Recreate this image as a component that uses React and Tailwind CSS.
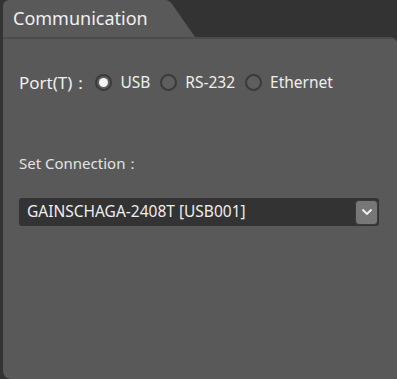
import React, { useState } from 'react';

const font = { fontFamily: '"Segoe UI", "Noto Sans", "Open Sans", sans-serif' };

const Radio = ({ checked, label, onClick }) => (
  <button onClick={onClick} className="flex items-center gap-[8px]">
    <span className="w-[17px] h-[17px] rounded-full border-[2px] border-[#3a3a3a] bg-[#5e5e5e] flex items-center justify-center">
      {checked && <span className="w-[9px] h-[9px] rounded-full bg-[#f4f4f4]"></span>}
    </span>
    <span className="text-[15.5px] text-[#eeeeee]">{label}</span>
  </button>
);

export default function App() {
  const [port, setPort] = useState('USB');

  return (
    <div className="w-[397px] h-[379px] bg-[#333333] overflow-hidden pl-[3px] flex flex-col" style={font}>
      {/* tab */}
      <div className="flex h-[37px] shrink-0">
        <div className="w-[158px] bg-[#595959] rounded-tl-[6px] pl-[10px] pt-[5px] text-[18px] text-[#f0f0f0]">
          Communication
        </div>
        <svg width="36" height="37" viewBox="0 0 36 37" className="block">
          <path d="M0 0 H4 Q8 0 11 4 L34 37 H0 Z" fill="#595959" />
        </svg>
      </div>

      {/* panel */}
      <div className="flex-1 bg-[#595959] border-t-[2px] border-[#4b4b4b] rounded-tr-[6px] rounded-bl-[8px] px-[16px] pt-[31px]">
        <div className="flex items-center">
          <span className="text-[17px] text-[#f0f0f0] mr-[6px]">Port(T)：</span>
          <div className="flex items-center gap-[10px]">
            <Radio checked={port === 'USB'} label="USB" onClick={() => setPort('USB')} />
            <Radio checked={port === 'RS-232'} label="RS-232" onClick={() => setPort('RS-232')} />
            <Radio checked={port === 'Ethernet'} label="Ethernet" onClick={() => setPort('Ethernet')} />
          </div>
        </div>

        <div className="mt-[56px] text-[15px] text-[#e4e4e4]">Set Connection：</div>

        <div className="mt-[24px] h-[28px] w-[360px] bg-[#333333] rounded-[3px] flex items-center justify-between pl-[8px] pr-[1px]">
          <span className="text-[15.5px] text-[#eeeeee]">GAINSCHAGA-2408T [USB001]</span>
          <span className="w-[23px] h-[25px] rounded-[4px] bg-[#777777] border border-[#3a3a3a] flex items-center justify-center">
            <svg width="12" height="8" viewBox="0 0 12 8">
              <path d="M1.5 1.5 L6 6 L10.5 1.5" fill="none" stroke="#f4f4f4" strokeWidth="1.8" />
            </svg>
          </span>
        </div>
      </div>
    </div>
  );
}
